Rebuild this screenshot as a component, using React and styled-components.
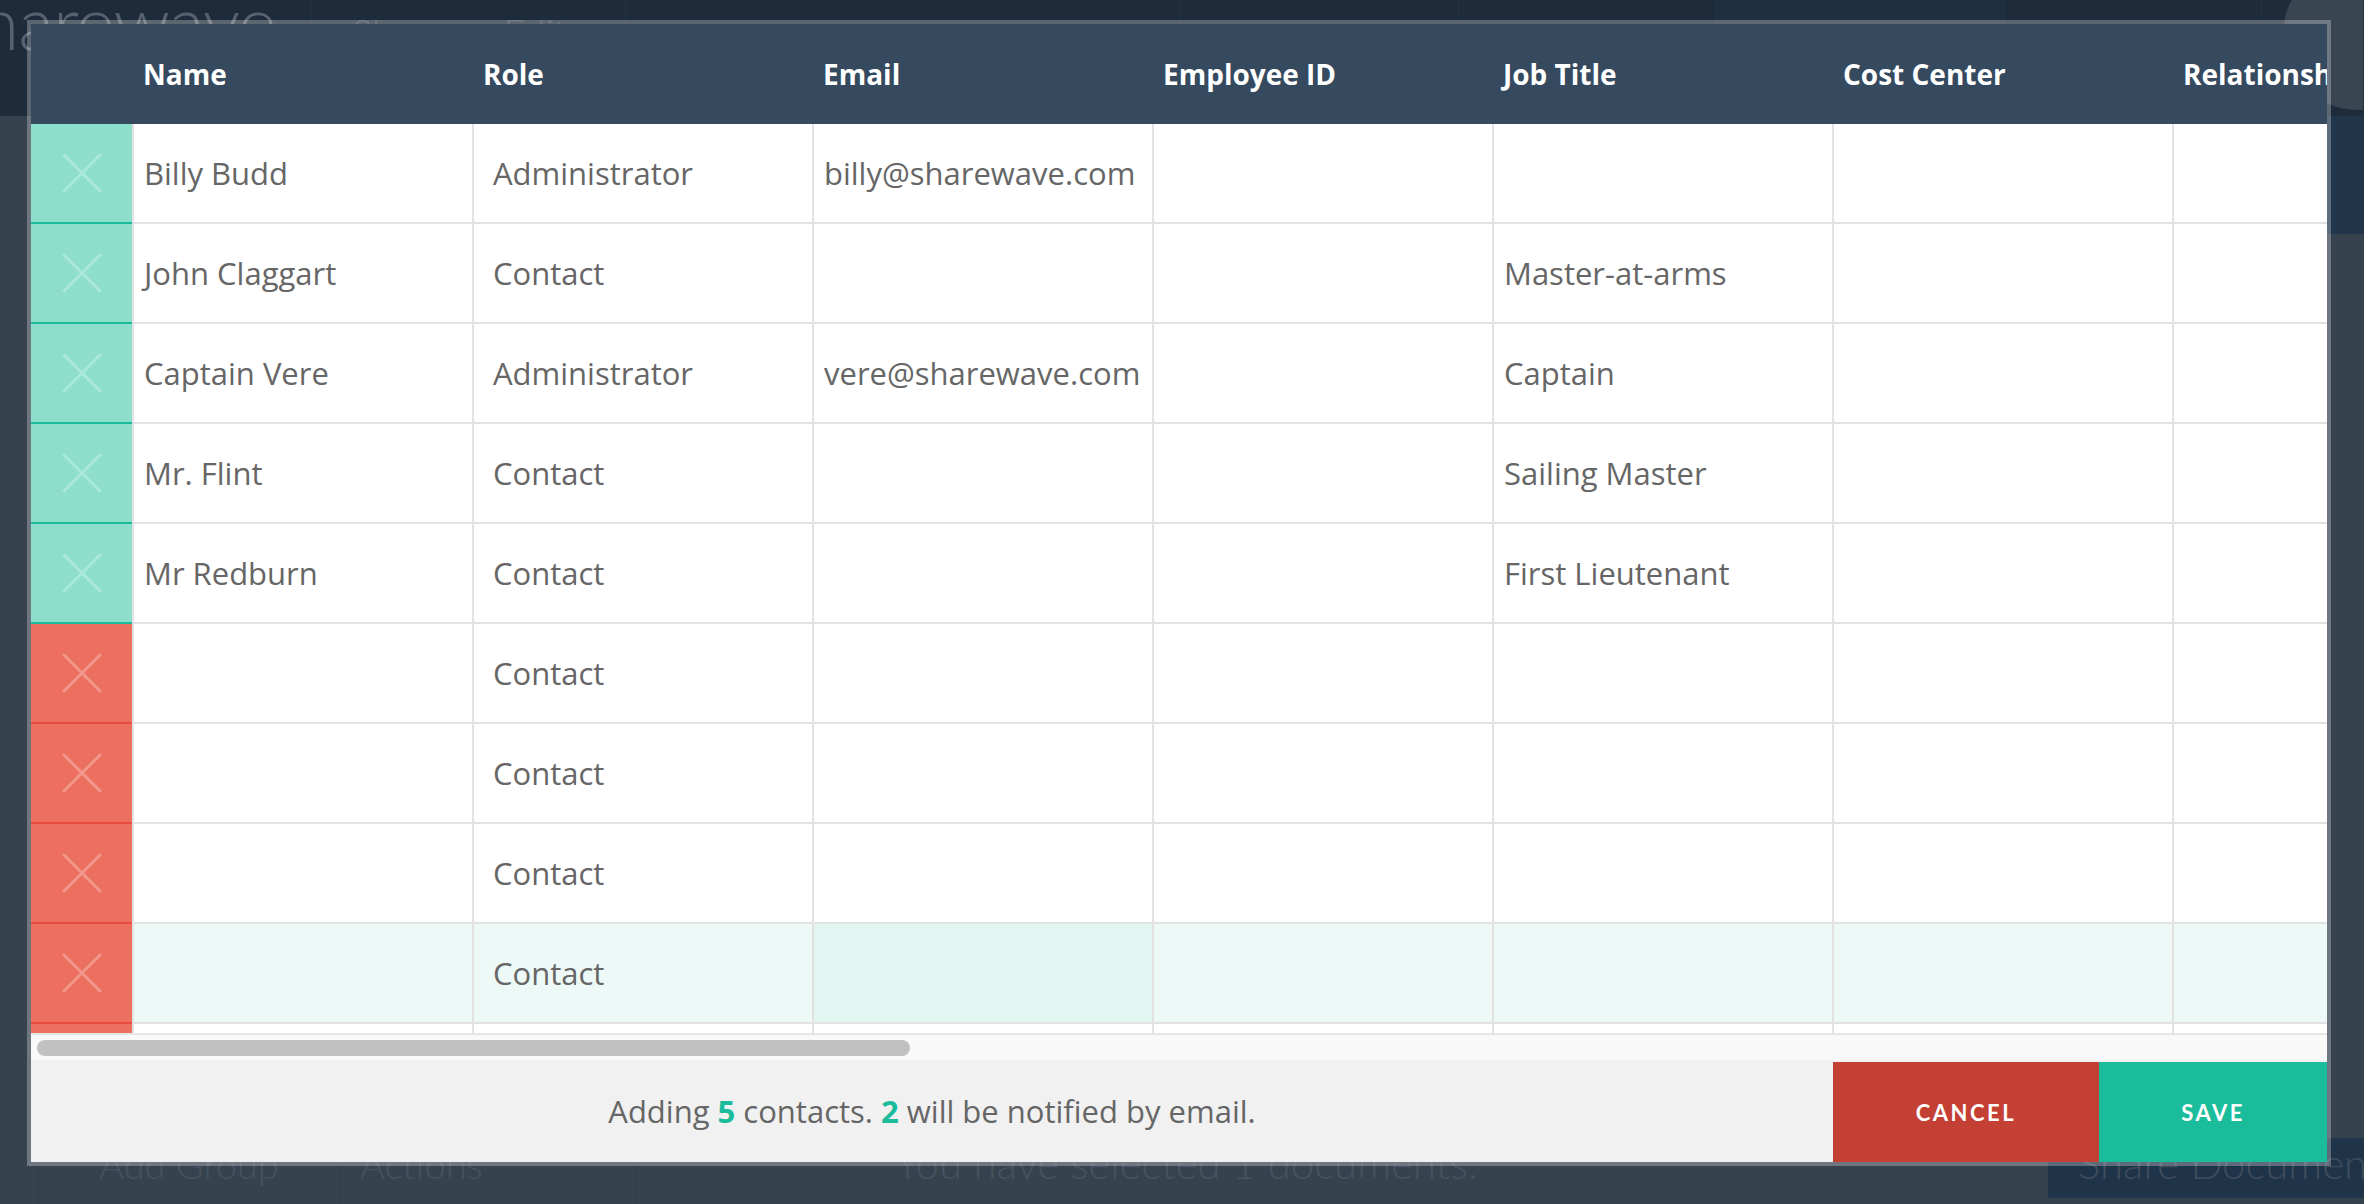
import React from 'react'
import styled, { createGlobalStyle } from 'styled-components'

// palette
const teal = '#1abc9c'
const red = '#e74c3c'
const navy = '#354a5f'
const line = '#e2e2e2'
const ink = '#666666'

const GlobalStyle = createGlobalStyle`
  html, body {
    margin: 0;
    padding: 0;
  }
  body {
    background: #36434f;
    font-family: "Open Sans", "Liberation Sans", sans-serif;
    overflow: hidden;
  }
  * {
    box-sizing: border-box;
  }
`

// ---------- dimmed app behind the dialog ----------
const Shell = styled.div`
  height: 100vh;
  display: flex;
  flex-direction: column;
  overflow: hidden;
  font-family: Lato, "Open Sans", sans-serif;
`

const TopBar = styled.div`
  height: 116px;
  flex-shrink: 0;
  display: flex;
  background: #1e2b3b;
`

const TopSection = styled.div`
  width: ${({w}) => w}px;
  flex-shrink: 0;
  display: flex;
  align-items: flex-start;
  gap: 60px;
  padding: 13px 0 0 40px;
  border-right: 1px solid #223142;
  background: ${({tint}) => tint ? '#202f40' : 'transparent'};
  overflow: hidden;
  position: relative;
`

const Logo = styled.div`
  margin: -28px 0 0 -92px;
  font-size: 74px;
  line-height: 1;
  font-weight: 300;
  color: #57626e;
  letter-spacing: -1px;
  white-space: nowrap;
`

const TopLink = styled.span`
  font-size: 38px;
  line-height: 1;
  font-weight: 300;
  color: #3c4857;
`

const Avatar = styled.div`
  position: absolute;
  right: -70px;
  top: -40px;
  width: 150px;
  height: 150px;
  border-radius: 50%;
  background: #3a4552;
`

const Middle = styled.div`
  flex: 1;
  display: flex;
  justify-content: flex-end;
`

const SidePanel = styled.div`
  width: 180px;
  display: flex;
  flex-direction: column;
`

const SideHead = styled.div`
  height: 118px;
  background: #22364b;
`

const BottomBar = styled.div`
  height: 76px;
  flex-shrink: 0;
  display: flex;
  align-items: stretch;
  padding-left: 38px;
`

const BottomItem = styled.div`
  width: ${({w}) => w ? `${w}px` : 'auto'};
  flex: ${({w}) => w ? '0 0 auto' : '1'};
  display: flex;
  align-items: flex-start;
  justify-content: ${({center}) => center ? 'center' : 'flex-start'};
  padding: ${({small}) => small ? 13 : 10}px 0 0 ${({pad}) => pad || 0}px;
  border-left: 1px solid #323e4a;
  font-size: ${({small}) => small ? 38 : 42}px;
  font-weight: 300;
  color: #46525f;
  white-space: nowrap;
`

const ShareButton = styled.div`
  width: 316px;
  height: 60px;
  margin-top: 10px;
  background: #1f3349;
  padding: 0 0 0 30px;
  font-size: 42px;
  font-weight: 300;
  color: #3e4c5c;
  white-space: nowrap;
  overflow: hidden;
`

// ---------- dialog ----------
const Modal = styled.div`
  position: fixed;
  left: 27px;
  top: 20px;
  width: 2304px;
  height: 1146px;
  border: 4px solid rgba(255, 255, 255, 0.28);
  background: #fff;
  background-clip: padding-box;
  display: flex;
  flex-direction: column;
`

const Viewport = styled.div`
  height: 1009px;
  flex-shrink: 0;
  overflow: hidden;
  background: #fff;
`

const HeadRow = styled.div`
  display: flex;
  height: 100px;
  background: ${navy};
`

const HeadCell = styled.div`
  width: ${({w}) => w || 340}px;
  flex-shrink: 0;
  display: flex;
  align-items: center;
  padding-left: 11px;
  font-size: 28px;
  font-weight: 700;
  color: #fff;
  white-space: nowrap;
`

const Row = styled.div`
  display: flex;
  height: 100px;
  background: ${({active}) => active ? '#edf9f6' : '#fff'};
`

const StatusCell = styled.div`
  width: 101px;
  flex-shrink: 0;
  display: flex;
  align-items: center;
  justify-content: center;
  background: ${({ok}) => ok ? '#8ddfcb' : '#ec6f60'};
  border-bottom: 2px solid ${({ok}) => ok ? teal : red};
`

const Cell = styled.div`
  width: 340px;
  flex-shrink: 0;
  display: flex;
  align-items: center;
  padding-left: ${({select}) => select ? 19 : 10}px;
  border-left: 2px solid ${line};
  border-bottom: 2px solid ${line};
  background: ${({selected}) => selected ? '#e1f6f1' : 'transparent'};
  font-size: 31px;
  font-weight: 400;
  color: ${ink};
  white-space: nowrap;
  overflow: hidden;
`

const Track = styled.div`
  height: 27px;
  flex-shrink: 0;
  display: flex;
  align-items: center;
  padding: 0 0 0 6px;
  border-top: 2px solid #e6e6e6;
  background: #f9f9f9;
`

const Thumb = styled.div`
  width: 873px;
  height: 16px;
  border-radius: 8px;
  background: #c1c1c1;
`

const Footer = styled.div`
  flex: 1;
  display: flex;
  align-items: flex-end;
  background: #f1f1f1;
`

const Message = styled.div`
  flex: 1;
  align-self: stretch;
  display: flex;
  align-items: center;
  justify-content: center;
  font-size: 31px;
  font-weight: 400;
  color: ${ink};
`

const Count = styled.span`
  color: ${teal};
  font-weight: 700;
`

const Button = styled.button`
  width: ${({w}) => w}px;
  height: 100px;
  border: 0;
  background: ${({kind}) => kind === 'cancel' ? '#c44034' : teal};
  color: #fff;
  font-family: Lato, "Open Sans", sans-serif;
  font-size: 22px;
  font-weight: 700;
  letter-spacing: 2.5px;
  text-transform: uppercase;
  cursor: pointer;
`

const columns = ['Name', 'Role', 'Email', 'Employee ID', 'Job Title', 'Cost Center', 'Relationship']

const people = [
    {ok: true, name: 'Billy Budd', role: 'Administrator', email: 'billy@sharewave.com', title: ''},
    {ok: true, name: 'John Claggart', role: 'Contact', email: '', title: 'Master-at-arms'},
    {ok: true, name: 'Captain Vere', role: 'Administrator', email: 'vere@sharewave.com', title: 'Captain'},
    {ok: true, name: 'Mr. Flint', role: 'Contact', email: '', title: 'Sailing Master'},
    {ok: true, name: 'Mr Redburn', role: 'Contact', email: '', title: 'First Lieutenant'},
    {ok: false, name: '', role: 'Contact', email: '', title: ''},
    {ok: false, name: '', role: 'Contact', email: '', title: ''},
    {ok: false, name: '', role: 'Contact', email: '', title: ''},
    {ok: false, name: '', role: 'Contact', email: '', title: '', active: true},
    {ok: false, name: '', role: 'Contact', email: '', title: ''},
]

function Cross() {
    return (
        <svg width="40" height="40" viewBox="0 0 40 40">
            <path d="M2 2 L38 38 M38 2 L2 38" stroke="rgba(255,255,255,0.28)" strokeWidth="3" strokeLinecap="round" fill="none" />
        </svg>
    )
}

function Backdrop() {
    return (
        <Shell>
            <TopBar>
                <TopSection w={312}><Logo>sharewave</Logo></TopSection>
                <TopSection w={314}><TopLink>Share</TopLink><TopLink>Edit</TopLink></TopSection>
                <TopSection w={554} />
                <TopSection w={279} />
                <TopSection w={257} />
                <TopSection w={289} tint />
                <TopSection w={257} />
                <TopSection w={102}><Avatar /></TopSection>
            </TopBar>
            <Middle>
                <SidePanel><SideHead /></SidePanel>
            </Middle>
            <BottomBar>
                <BottomItem w={301} center small>Add Group</BottomItem>
                <BottomItem w={297} pad={20} small>Actions</BottomItem>
                <BottomItem pad={258}>You have selected 1 documents.</BottomItem>
                <ShareButton>Share Document</ShareButton>
            </BottomBar>
        </Shell>
    )
}

export default function App() {
    return (
        <>
            <GlobalStyle />
            <Backdrop />
            <Modal>
                <Viewport>
                    <HeadRow>
                        <HeadCell w={101} />
                        {columns.map(c => <HeadCell key={c}>{c}</HeadCell>)}
                    </HeadRow>
                    {people.map((p, i) => (
                        <Row key={i} active={p.active}>
                            <StatusCell ok={p.ok}><Cross /></StatusCell>
                            <Cell>{p.name}</Cell>
                            <Cell select>{p.role}</Cell>
                            <Cell selected={p.active}>{p.email}</Cell>
                            <Cell />
                            <Cell>{p.title}</Cell>
                            <Cell />
                            <Cell />
                        </Row>
                    ))}
                </Viewport>
                <Track><Thumb /></Track>
                <Footer>
                    <Message>
                        <span>Adding <Count>5</Count> contacts. <Count>2</Count> will be notified by email.</span>
                    </Message>
                    <Button kind="cancel" w={266}>Cancel</Button>
                    <Button kind="save" w={228}>Save</Button>
                </Footer>
            </Modal>
        </>
    )
}
